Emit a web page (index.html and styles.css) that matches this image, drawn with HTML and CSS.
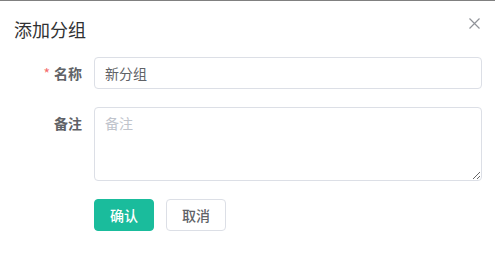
FILE: index.html
```html
<!DOCTYPE html>
<html lang="zh-CN">
<head>
    <meta charset="UTF-8">
    <meta name="viewport" content="width=device-width, initial-scale=1.0">
    <title>添加分组</title>
    <link rel="stylesheet" href="styles.css">
</head>
<body>
    <div class="dialog">
        <div class="dialog-header">
            <span class="dialog-title">添加分组</span>
            <button class="dialog-close" type="button" aria-label="关闭">
                <svg width="11" height="11" viewBox="0 0 11 11"><path d="M0.5 0.5L10.5 10.5M10.5 0.5L0.5 10.5" stroke="#909399" stroke-width="1.2" fill="none"/></svg>
            </button>
        </div>
        <form class="dialog-body">
            <div class="form-item">
                <label class="form-label required">名称</label>
                <div class="form-content"><input type="text" class="form-input" value="新分组"></div>
            </div>
            <div class="form-item">
                <label class="form-label">备注</label>
                <div class="form-content"><textarea class="form-textarea" placeholder="备注"></textarea></div>
            </div>
            <div class="form-item">
                <div class="form-label"></div>
                <div class="form-content buttons">
                    <button type="button" class="btn btn-primary">确认</button>
                    <button type="button" class="btn">取消</button>
                </div>
            </div>
        </form>
    </div>
</body>
</html>
```

FILE: styles.css
```css
body { margin: 0; font-family: "Noto Sans CJK SC", "Noto Sans", sans-serif; background-color: #fff; }
.dialog { border-top: 1px solid #808080; height: 261px; box-sizing: border-box; }
.dialog-header { display: flex; justify-content: space-between; align-items: center; padding: 14px 15px 0 14px; height: 27px; }
.dialog-title { font-size: 18px; color: #303133; line-height: 24px; }
.dialog-close { border: none; background: none; padding: 0; margin-top: -10px; cursor: pointer; display: flex; }
.dialog-body { padding: 15px 13px 0 14px; }
.form-item { display: flex; margin-bottom: 18px; }
.form-label { width: 68px; padding-right: 12px; text-align: right; font-size: 14px; font-weight: bold; color: #606266; line-height: 32px; flex-shrink: 0; }
.form-label.required::before { content: "*"; color: #f56c6c; margin-right: 4px; font-weight: normal; }
.form-content { flex-grow: 1; }
.form-input { width: 100%; box-sizing: border-box; height: 32px; border: 1px solid #dcdfe6; border-radius: 4px; padding: 0 10px; font-family: inherit; font-size: 14px; color: #606266; outline: none; }
.form-textarea { display: block; width: 100%; box-sizing: border-box; height: 74px; border: 1px solid #dcdfe6; border-radius: 4px; padding: 5px 10px; font-family: inherit; font-size: 14px; line-height: 21px; color: #606266; outline: none; }
.form-textarea::placeholder { color: #c0c4cc; }
.buttons { display: flex; gap: 12px; }
.btn { width: 60px; height: 32px; border: 1px solid #dcdfe6; border-radius: 4px; background-color: #fff; color: #606266; font-family: inherit; font-size: 14px; font-weight: 500; padding: 0; cursor: pointer; }
.btn-primary { background-color: #1abc9c; border-color: #1abc9c; color: #fff; }
```
